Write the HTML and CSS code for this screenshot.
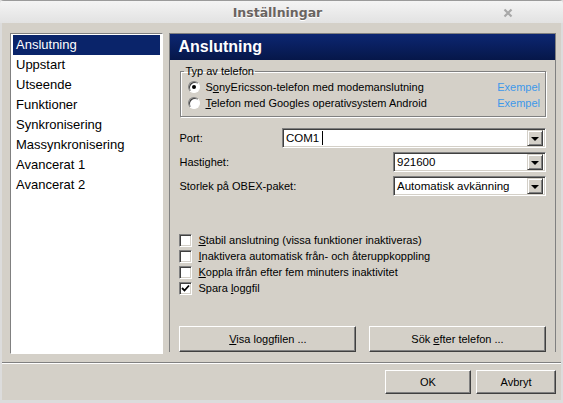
FILE: index.html
```html
<!doctype html>
<html lang="sv">
<head>
  <meta charset="utf-8" />
  <title>Inställningar</title>
  <link rel="stylesheet" href="styles.css">
</head>
<body>
  <div class="window">
    <div class="titlebar">
      <div class="title">Inställningar</div>
      <svg class="close" width="10" height="10" viewBox="0 0 10 10"><path d="M1.5 1.5 L8.5 8.5 M8.5 1.5 L1.5 8.5" stroke="#a8a8a8" stroke-width="2.2" /></svg>
    </div>

    <div class="frame">
      <div class="main">
        <ul class="nav">
          <li class="active">Anslutning</li>
          <li>Uppstart</li>
          <li>Utseende</li>
          <li>Funktioner</li>
          <li>Synkronisering</li>
          <li>Massynkronisering</li>
          <li>Avancerat 1</li>
          <li>Avancerat 2</li>
        </ul>

        <div class="panel">
          <div class="panel-head">Anslutning</div>
          <div class="panel-body">
            <fieldset class="group">
              <legend>Typ av telefon</legend>
              <div class="radio-row">
                <span class="radio checked"></span>
                <span class="label">S<u>o</u>nyEricsson-telefon med modemanslutning</span>
                <a class="link">Exempel</a>
              </div>
              <div class="radio-row">
                <span class="radio"></span>
                <span class="label"><u>T</u>elefon med Googles operativsystem Android</span>
                <a class="link">Exempel</a>
              </div>
            </fieldset>

            <div class="form-row">
              <span class="label">Port:</span>
              <div class="combo combo-wide"><span class="value">COM1<i class="caret"></i></span><span class="drop"><b></b></span></div>
            </div>
            <div class="form-row">
              <span class="label">Hastighet:</span>
              <div class="combo"><span class="value">921600</span><span class="drop"><b></b></span></div>
            </div>
            <div class="form-row">
              <span class="label">Storlek på OBEX-paket:</span>
              <div class="combo"><span class="value">Automatisk avkänning</span><span class="drop"><b></b></span></div>
            </div>

            <div class="checks">
              <div class="check-row"><span class="box"></span><span class="label"><u>S</u>tabil anslutning (vissa funktioner inaktiveras)</span></div>
              <div class="check-row"><span class="box"></span><span class="label"><u>I</u>naktivera automatisk från- och återuppkoppling</span></div>
              <div class="check-row"><span class="box"></span><span class="label"><u>K</u>oppla ifrån efter fem minuters inaktivitet</span></div>
              <div class="check-row"><span class="box checked">
                <svg width="9" height="9" viewBox="0 0 9 9"><path d="M1 4 L3.5 6.5 L8 1.5" fill="none" stroke="#000" stroke-width="1.8" /></svg>
              </span><span class="label">Spara <u>l</u>oggfil</span></div>
            </div>

            <div class="actions">
              <button class="btn wide"><u>V</u>isa loggfilen ...</button>
              <button class="btn wide">Sök <u>e</u>fter telefon ...</button>
            </div>
          </div>
        </div>
      </div>

      <div class="separator"></div>

      <div class="footer">
        <button class="btn ok">OK</button>
        <button class="btn cancel">Avbryt</button>
      </div>
    </div>
  </div>
</body>
</html>
```

FILE: styles.css
```css
:root{
  --face:#d4d0c8; --shadow:#808080; --dark:#404040; --navy:#0a246a;
  font-family:"Liberation Sans", Arial, sans-serif;
}
body{margin:0;background:#dcdcdc}
.window{width:563px;height:403px;display:flex;flex-direction:column;background:#dcdcdc;border-radius:4px 4px 0 0;overflow:hidden}

.titlebar{height:22px;border-top:1px solid #9a9a9a;background:linear-gradient(180deg,#f4f4f4 0%,#e2e2e2 100%);display:flex;align-items:center;justify-content:center;position:relative}
.title{font-family:"DejaVu Sans",sans-serif;font-weight:700;font-size:12.5px;color:#6a6460;text-shadow:0 1px 0 #fff;margin-left:-8px}
.close{position:absolute;right:50px;top:7px}

.frame{flex:1;margin:0 2px 3px;background:var(--face);display:flex;flex-direction:column}
.main{display:flex;gap:6px;padding:10px 5px 0 8px}

.nav{list-style:none;margin:0;padding:1px 2px;width:148px;height:317px;background:#fff;border:1px solid;border-color:var(--shadow) #fff #fff var(--shadow);font-size:13px}
.nav li{height:20px;line-height:20px;padding-left:3px;color:#000}
.nav li.active{background:var(--navy);color:#fff}

.panel{width:386px;height:318px;border:1px solid var(--shadow);border-bottom:none;display:flex;flex-direction:column}
.panel-head{height:26px;background:linear-gradient(180deg,#0c2672 0%,#061749 100%);color:#fff;font-weight:700;font-size:16px;line-height:26px;padding-left:8px}
.panel-body{padding:0 9px;font-size:11px;flex:1;display:flex;flex-direction:column}

.group{margin:5px 0 0 1px;padding:2px 8px 5px 7px;border:1px solid var(--shadow);box-shadow:1px 1px 0 #fff, inset 1px 1px 0 #fff;border-radius:0}
.group legend{padding:0 1px;margin-left:-4px;font-size:11px}
.radio-row{display:flex;align-items:center;height:16px}
.radio{width:12px;height:12px;border-radius:50%;background:#fff;border:1px solid;border-color:var(--shadow) #fff #fff var(--shadow);box-shadow:inset 1px 1px 0 var(--dark);box-sizing:border-box;margin-right:5px;display:flex;align-items:center;justify-content:center}
.radio.checked::after{content:"";width:4px;height:4px;border-radius:50%;background:#000}
.radio-row .label{flex:1}
.link{color:#3d98ea;margin-right:-3px}

.form-row{display:flex;align-items:center;justify-content:space-between;margin-top:4px}
.group + .form-row{margin-top:11px}
.combo{width:153px;height:20px;box-sizing:border-box;background:#fff;border:1px solid;border-color:var(--shadow) #fff #fff var(--shadow);box-shadow:inset 1px 1px 0 var(--dark),inset -1px -1px 0 var(--face);display:flex;align-items:center;padding:2px}
.combo-wide{width:264px}
.combo .value{flex:1;font-size:11.5px;padding-left:1px;display:flex;align-items:center;white-space:nowrap;overflow:hidden}
.caret{display:inline-block;width:1px;height:14px;background:#000;margin-left:3px}
.drop{width:16px;height:16px;flex:none;box-sizing:border-box;background:var(--face);border:1px solid;border-color:var(--face) var(--dark) var(--dark) var(--face);box-shadow:inset 1px 1px 0 #fff,inset -1px -1px 0 var(--shadow);display:flex;align-items:center;justify-content:center}
.drop b{width:0;height:0;border-left:4px solid transparent;border-right:4px solid transparent;border-top:4px solid #000;margin-top:1px}

.checks{margin-top:36px;display:flex;flex-direction:column}
.check-row{display:flex;align-items:center;height:16px}
.box{width:13px;height:13px;box-sizing:border-box;background:#fff;border:1px solid;border-color:var(--shadow) #fff #fff var(--shadow);box-shadow:inset 1px 1px 0 var(--dark),inset -1px -1px 0 var(--face);margin-right:6px;display:flex;align-items:center;justify-content:center}

.actions{margin-top:auto;display:flex;justify-content:space-between}
.btn{font-family:"Liberation Sans", Arial, sans-serif;font-size:11px;color:#000;background:var(--face);border:1px solid;border-color:#fff var(--dark) var(--dark) #fff;box-shadow:inset -1px -1px 0 var(--shadow);padding:0;height:26px}
.btn.wide{width:177px}

.separator{margin-top:8px;height:1px;background:var(--shadow);border-bottom:1px solid #fff}
.footer{display:flex;justify-content:flex-end;gap:5px;padding:6px 5px 0 0}
.btn.ok{width:86px;height:24px}
.btn.cancel{width:80px;height:24px}
```
